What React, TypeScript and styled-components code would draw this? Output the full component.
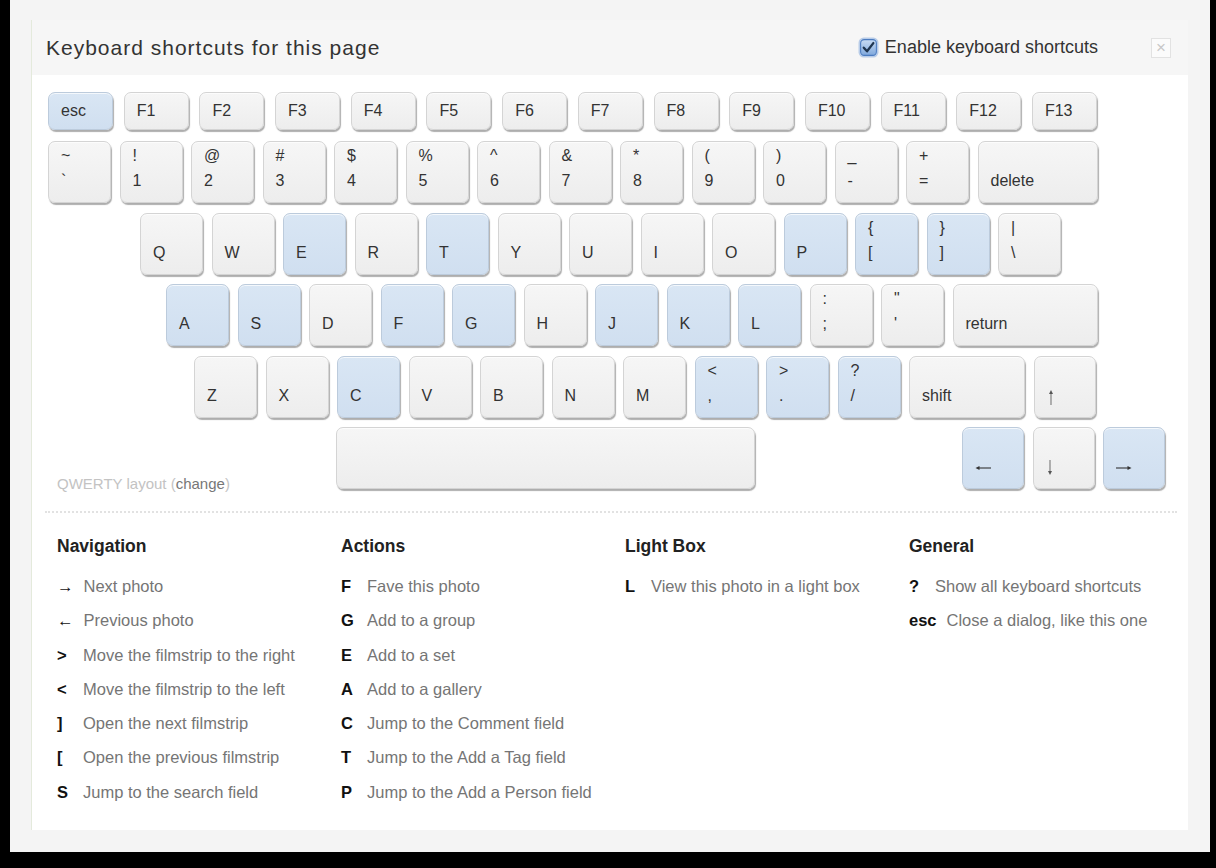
import React from "react";
import styled, { createGlobalStyle } from "styled-components";

const Global = createGlobalStyle`
  html, body { margin: 0; padding: 0; background: #000; }
  body { font-family: "Liberation Sans", Arial, sans-serif; }
  * { box-sizing: border-box; }
`;

const Frame = styled.div`
  margin-left: 10px;
  width: 1200px;
  height: 852px;
  background: #f4f4f4;
  padding: 20px 22px 22px 21px;
`;

const Dialog = styled.div`
  width: 1157px;
  height: 810px;
  background: #fff;
  border-left: 1px solid #e4eadc;
  display: flex;
  flex-direction: column;
`;

const Header = styled.div`
  height: 55px;
  background: #f6f6f6;
  display: flex;
  align-items: center;
  padding: 0 17px 0 14px;
`;

const Title = styled.h1`
  margin: 0;
  font-size: 21px;
  letter-spacing: 1px;
  font-weight: normal;
  color: #333;
  flex: 1;
`;

const Toggle = styled.label`
  display: flex;
  align-items: center;
  gap: 6px;
  font-size: 18px;
  color: #333;
  margin-right: 53px;
`;

const Close = styled.div`
  width: 20px;
  height: 20px;
  border: 1px solid #e2e2e2;
  background: #fbfbfb;
  color: #c8c8c8;
  font-size: 17px;
  line-height: 17px;
  text-align: center;
`;

const Body = styled.div`
  padding: 17px 0 0 16px;
`;

const Keyboard = styled.div`
  display: flex;
  flex-direction: column;
  gap: 9.5px;
`;

const Row = styled.div<{ $indent?: number; $gap?: number; $mb?: number }>`
  display: flex;
  gap: ${(p) => p.$gap ?? 8.5}px;
  margin-left: ${(p) => p.$indent ?? 0}px;
  margin-bottom: ${(p) => p.$mb ?? 0}px;
  align-items: flex-end;
`;

const Key = styled.div<{ $w?: number; $h?: number; $hl?: boolean; $two?: boolean; $center?: boolean }>`
  flex: none;
  width: ${(p) => p.$w ?? 63}px;
  height: ${(p) => p.$h ?? 62}px;
  border-radius: 7px;
  border: 1px solid ${(p) => (p.$hl ? "#bccbdc" : "#d4d4d4")};
  background: ${(p) =>
    p.$hl ? "linear-gradient(#d9e6f4, #d0dff0)" : "linear-gradient(#f6f6f6, #ededed)"};
  box-shadow: 1px 2px 1px rgba(0, 0, 0, 0.32), inset 0 1px 0 rgba(255, 255, 255, 0.7);
  display: flex;
  flex-direction: column;
  justify-content: ${(p) => (p.$center ? "center" : p.$two ? "space-between" : "flex-end")};
  padding: ${(p) => (p.$center ? "0 0 0 12px" : p.$two ? "5px 0 12px 12px" : "0 0 12px 12px")};
  font-size: 16px;
  line-height: 18px;
  color: #333;
  svg {
    display: block;
  }
`;

const Caption = styled.div`
  width: 279.5px;
  flex: none;
  align-self: flex-end;
  padding: 0 0 0 9px;
  font-size: 15px;
  line-height: 16px;
  margin-bottom: -3px;
  color: #c3c3c3;
  b {
    font-weight: normal;
    color: #777;
  }
`;

const Spacer = styled.div<{ $w: number }>`
  width: ${(p) => p.$w}px;
  flex: none;
`;

const Separator = styled.div`
  margin: 22px 11px 0 13px;
  border-top: 2px dotted #e2e2e2;
`;

const Sections = styled.div`
  display: grid;
  grid-template-columns: repeat(4, 284px);
  padding: 23px 0 0 25px;
`;

const Section = styled.div``;

const Heading = styled.h2`
  margin: 0 0 13px 0;
  font-size: 17.5px;
  line-height: 20px;
  font-weight: bold;
  color: #222;
`;

const List = styled.ul`
  list-style: none;
  margin: 0;
  padding: 0;
`;

const Item = styled.li`
  display: flex;
  align-items: baseline;
  height: 34.3px;
  line-height: 34.3px;
`;

const ItemKey = styled.span`
  min-width: 16px;
  margin-right: 10px;
  font-size: 16.5px;
  font-weight: bold;
  color: #111;
`;

const ItemText = styled.span`
  font-size: 16.5px;
  color: #757575;
`;

const Checkbox = () => (
  <svg width="21" height="21" viewBox="0 0 20 20">
    <defs>
      <linearGradient id="cb" x1="0" y1="0" x2="0" y2="1">
        <stop offset="0" stopColor="#c9dcf4" />
        <stop offset="1" stopColor="#7fa8dc" />
      </linearGradient>
    </defs>
    <rect x="0.5" y="0.5" width="19" height="19" rx="5" fill="#6c9ad6" opacity="0.45" />
    <rect x="2.5" y="2.5" width="15" height="15" rx="3.5" fill="url(#cb)" stroke="#4c7cc0" strokeWidth="1" />
    <path d="M5.5 10.2 L8.6 13.6 L14.6 5.8" fill="none" stroke="#1f3550" strokeWidth="2.2" strokeLinecap="round" strokeLinejoin="round" />
  </svg>
);

const ArrowIcon = ({ dir }: { dir: "left" | "right" | "up" | "down" }) => {
  if (dir === "left" || dir === "right") {
    const d =
      dir === "left"
        ? { line: "M3 8 H16", head: "M0.5 8 L4.5 6 L4.5 10 Z" }
        : { line: "M0 8 H13", head: "M15.5 8 L11.5 6 L11.5 10 Z" };
    return (
      <svg width="16" height="16" viewBox="0 0 16 16">
        <path d={d.line} stroke="#333" strokeWidth="1.1" />
        <path d={d.head} fill="#333" />
      </svg>
    );
  }
  const d =
    dir === "up"
      ? { line: "M4 4 V16", head: "M4 1 L2 5 L6 5 Z" }
      : { line: "M4 0 V12", head: "M4 15 L2 11 L6 11 Z" };
  return (
    <svg width="8" height="16" viewBox="0 0 8 16">
      <path d={d.line} stroke="#777" strokeWidth="1.1" />
      <path d={d.head} fill="#555" />
    </svg>
  );
};

type K = { t?: string; b?: string; w?: number; hl?: boolean };

const fnKeys = ["esc", "F1", "F2", "F3", "F4", "F5", "F6", "F7", "F8", "F9", "F10", "F11", "F12", "F13"];

const numRow: K[] = [
  { t: "~", b: "`" },
  { t: "!", b: "1" },
  { t: "@", b: "2" },
  { t: "#", b: "3" },
  { t: "$", b: "4" },
  { t: "%", b: "5" },
  { t: "^", b: "6" },
  { t: "&", b: "7" },
  { t: "*", b: "8" },
  { t: "(", b: "9" },
  { t: ")", b: "0" },
  { t: "_", b: "-" },
  { t: "+", b: "=" },
];

const hlSet = new Set(["E", "T", "P", "{", "}", "A", "S", "F", "G", "J", "K", "L", "C", "<", ">", "?"]);

const qRow: K[] = [
  ..."QWERTYUIOP".split("").map((c) => ({ b: c })),
  { t: "{", b: "[" },
  { t: "}", b: "]" },
  { t: "|", b: "\\" },
];

const aRow: K[] = [
  ..."ASDFGHJKL".split("").map((c) => ({ b: c })),
  { t: ":", b: ";" },
  { t: "\"", b: "'" },
];

const zRow: K[] = [
  ..."ZXCVBNM".split("").map((c) => ({ b: c })),
  { t: "<", b: "," },
  { t: ">", b: "." },
  { t: "?", b: "/" },
];

const renderKey = (k: K, i: number) => {
  const id = k.t ?? k.b ?? "";
  const hl = k.hl ?? hlSet.has(id);
  if (k.t) {
    return (
      <Key key={i} $hl={hl} $two $w={k.w}>
        <span>{k.t}</span>
        <span>{k.b}</span>
      </Key>
    );
  }
  return (
    <Key key={i} $hl={hl} $w={k.w}>
      <span>{k.b}</span>
    </Key>
  );
};

const sections = [
  {
    title: "Navigation",
    items: [
      ["→", "Next photo"],
      ["←", "Previous photo"],
      [">", "Move the filmstrip to the right"],
      ["<", "Move the filmstrip to the left"],
      ["]", "Open the next filmstrip"],
      ["[", "Open the previous filmstrip"],
      ["S", "Jump to the search field"],
    ],
  },
  {
    title: "Actions",
    items: [
      ["F", "Fave this photo"],
      ["G", "Add to a group"],
      ["E", "Add to a set"],
      ["A", "Add to a gallery"],
      ["C", "Jump to the Comment field"],
      ["T", "Jump to the Add a Tag field"],
      ["P", "Jump to the Add a Person field"],
    ],
  },
  {
    title: "Light Box",
    items: [["L", "View this photo in a light box"]],
  },
  {
    title: "General",
    items: [
      ["?", "Show all keyboard shortcuts"],
      ["esc", "Close a dialog, like this one"],
    ],
  },
];

export default function App() {
  return (
    <>
      <Global />
      <Frame>
        <Dialog>
          <Header>
            <Title>Keyboard shortcuts for this page</Title>
            <Toggle>
              <Checkbox />
              Enable keyboard shortcuts
            </Toggle>
            <Close>×</Close>
          </Header>
          <Body>
            <Keyboard>
              <Row $gap={10.7} $mb={1.5}>
                {fnKeys.map((f, i) => (
                  <Key key={f} $w={65} $h={38} $center $hl={i === 0}>
                    <span>{f}</span>
                  </Key>
                ))}
              </Row>
              <Row>
                {numRow.map(renderKey)}
                <Key $w={120}>
                  <span>delete</span>
                </Key>
              </Row>
              <Row $indent={92}>{qRow.map(renderKey)}</Row>
              <Row $indent={118}>
                {aRow.map(renderKey)}
                <Key $w={145}>
                  <span>return</span>
                </Key>
              </Row>
              <Row $indent={146}>
                {zRow.map(renderKey)}
                <Key $w={116}>
                  <span>shift</span>
                </Key>
                <Key $w={62}>
                  <ArrowIcon dir="up" />
                </Key>
              </Row>
              <Row $gap={8.5}>
                <Caption>
                  QWERTY layout (<b>change</b>)
                </Caption>
                <Key $w={419} />
                <Spacer $w={190} />
                <Key $w={62} $hl>
                  <ArrowIcon dir="left" />
                </Key>
                <Key $w={62}>
                  <ArrowIcon dir="down" />
                </Key>
                <Key $w={62} $hl>
                  <ArrowIcon dir="right" />
                </Key>
              </Row>
            </Keyboard>
          </Body>
          <Separator />
          <Sections>
            {sections.map((s) => (
              <Section key={s.title}>
                <Heading>{s.title}</Heading>
                <List>
                  {s.items.map(([k, d]) => (
                    <Item key={d}>
                      <ItemKey>{k}</ItemKey>
                      <ItemText>{d}</ItemText>
                    </Item>
                  ))}
                </List>
              </Section>
            ))}
          </Sections>
        </Dialog>
      </Frame>
    </>
  );
}
